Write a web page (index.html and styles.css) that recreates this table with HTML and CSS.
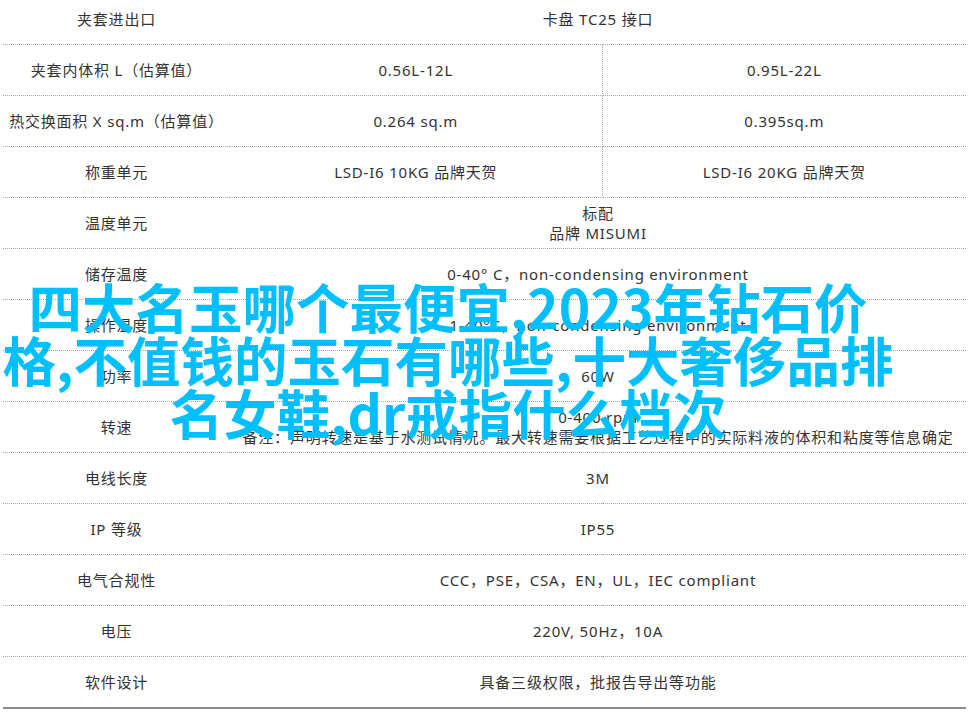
FILE: index.html
```html
<!DOCTYPE html>
<html lang="zh-CN">
<head>
<meta charset="utf-8">
<title>规格参数</title>
<link rel="stylesheet" href="styles.css">
</head>
<body>
<div class="page">
  <table class="spec">
    <colgroup>
      <col class="c1"><col class="c2"><col class="c3">
    </colgroup>
    <tbody>
      <tr><td class="k">夹套进出口</td><td class="v" colspan="2">卡盘 TC25 接口</td></tr>
      <tr><td class="k">夹套内体积 L（估算值）</td><td class="v mid">0.56L-12L</td><td class="v">0.95L-22L</td></tr>
      <tr><td class="k">热交换面积 X sq.m（估算值）</td><td class="v mid">0.264 sq.m</td><td class="v">0.395sq.m</td></tr>
      <tr><td class="k">称重单元</td><td class="v mid">LSD-I6 10KG 品牌天贺</td><td class="v">LSD-I6 20KG 品牌天贺</td></tr>
      <tr><td class="k">温度单元</td><td class="v" colspan="2">标配<br>品牌 MISUMI</td></tr>
      <tr><td class="k">储存温度</td><td class="v" colspan="2">0-40° C，non-condensing environment</td></tr>
      <tr><td class="k">操作温度</td><td class="v" colspan="2">1-40°C，non-condensing environment</td></tr>
      <tr><td class="k">功率</td><td class="v" colspan="2">60W</td></tr>
      <tr><td class="k">转速</td><td class="v" colspan="2">0-400 rpm<br>备注：声明转速是基于水测试情况。最大转速需要根据工艺过程中的实际料液的体积和粘度等信息确定</td></tr>
      <tr><td class="k">电线长度</td><td class="v" colspan="2">3M</td></tr>
      <tr><td class="k">IP 等级</td><td class="v" colspan="2">IP55</td></tr>
      <tr><td class="k">电气合规性</td><td class="v" colspan="2">CCC，PSE，CSA，EN，UL，IEC compliant</td></tr>
      <tr><td class="k">电压</td><td class="v" colspan="2">220V, 50Hz，10A</td></tr>
      <tr class="last"><td class="k">软件设计</td><td class="v" colspan="2">具备三级权限，批报告导出等功能</td></tr>
    </tbody>
  </table>
  <h1 class="headline">四大名玉哪个最便宜,2023年钻石价<br>格,不值钱的玉石有哪些,十大奢侈品排<br>名女鞋,dr戒指什么档次</h1>
</div>
</body>
</html>
```
FILE: styles.css
```css
html, body {
  margin: 0;
  padding: 0;
  background: #fff;
}

.page {
  position: relative;
  width: 971px;
  height: 716px;
  overflow: hidden;
  font-family: "Noto Sans", "Noto Sans CJK SC", sans-serif;
  color: #333;
}

.spec {
  margin: -6px 0 0 3px;
  width: 963px;
  border-collapse: collapse;
  table-layout: fixed;
  font-size: 15px;
  letter-spacing: 0.8px;
  line-height: 20px;
}

.spec col.c1 { width: 227px; }
.spec col.c2 { width: 372px; }

.spec td {
  height: 50px;
  padding: 0;
  text-align: center;
  vertical-align: middle;
  border-bottom: 1px dotted #a8a8a8;
}

.spec td.mid {
  border-right: 1px dotted #a8a8a8;
}

.spec tr.last td {
  border-bottom: 2px solid #8c8c8c;
}

.headline {
  position: absolute;
  left: 0;
  top: 279px;
  width: 896px;
  margin: 0;
  font-family: "Noto Sans CJK SC", sans-serif;
  font-weight: 700;
  font-size: 53.5px;
  line-height: 53px;
  color: #00bfff;
  text-align: center;
  white-space: nowrap;
}
```
